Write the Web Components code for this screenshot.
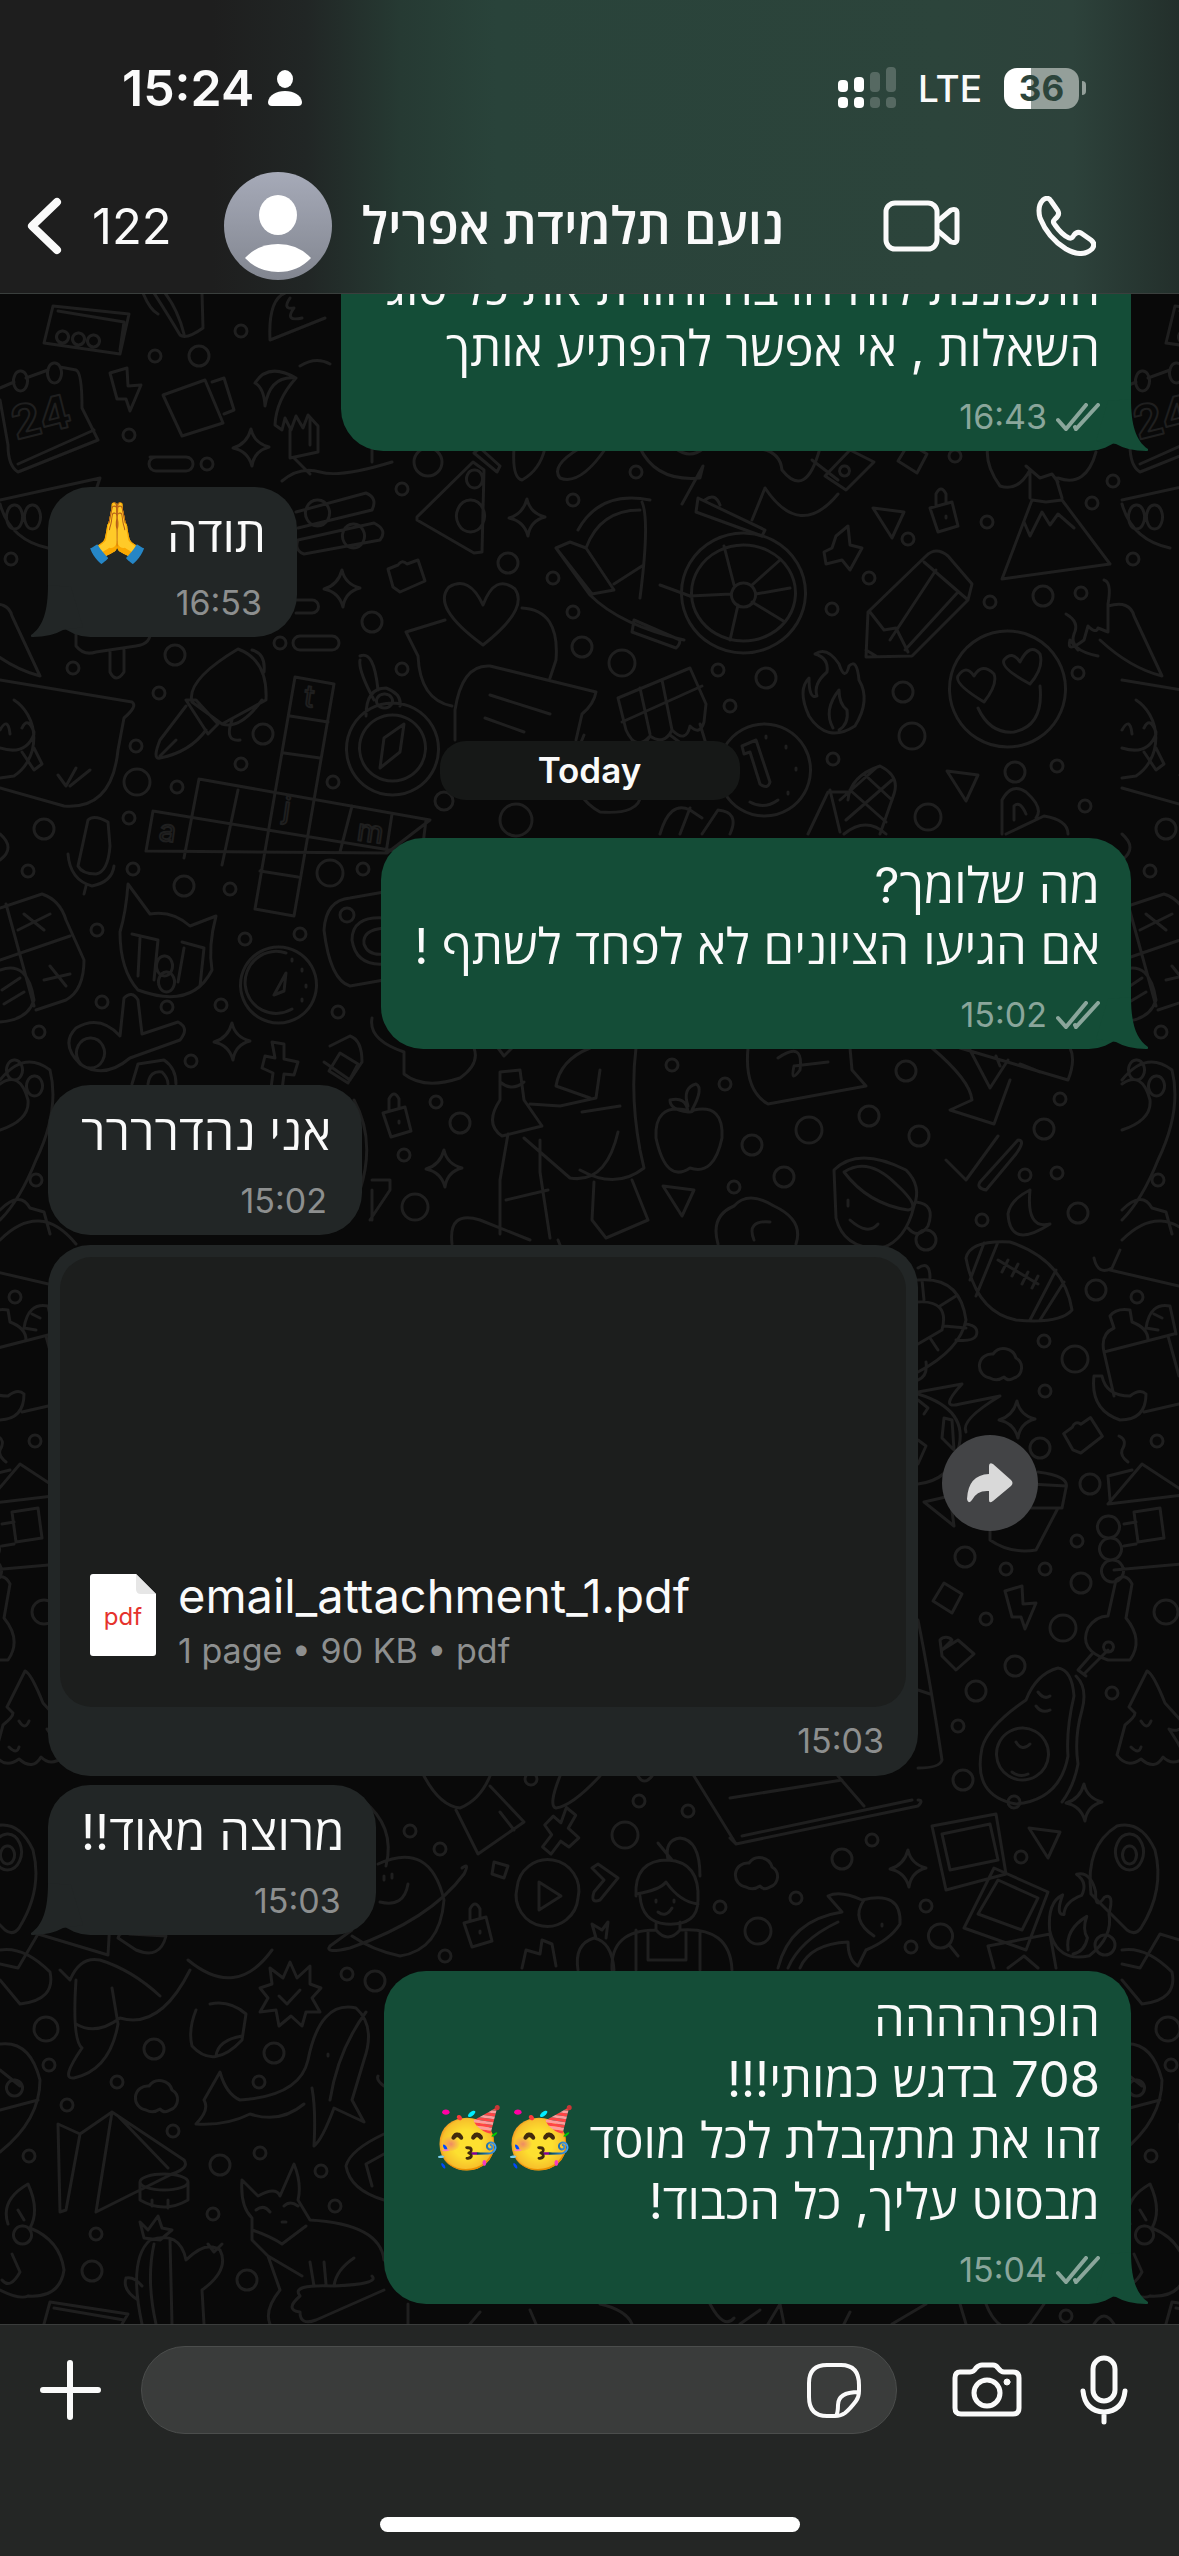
<!DOCTYPE html>
<html lang="he">
<head>
<meta charset="utf-8">
<meta name="viewport" content="width=device-width, initial-scale=1">
<title>Chat</title>
<style>
	html, body {
		margin: 0;
		height: 100%;
		background: #090909;
	}
	body {
		font-family: Inter, "Open Sans", "Noto Color Emoji", sans-serif;
		color: #fafafa;
	}
	.emoji {
		font-size: 58px;
		line-height: 50px;
	}
</style>
</head>
<body>
<chat-app>
	<chat-header slot="header" unread="122">נועם תלמידת אפריל</chat-header>

	<message-bubble direction="out" tail time="16:43">
		<div>התכוננת לזה הרבה וחזרת את כל סוגי</div>
		<div>השאלות , אי אפשר להפתיע אותך</div>
	</message-bubble>
	<message-bubble direction="in" tail time="16:53"><div>תודה <span class="emoji">🙏</span></div></message-bubble>
	<day-label>Today</day-label>
	<message-bubble direction="out" tail time="15:02">
		<div>מה שלומך?</div>
		<div>אם הגיעו הציונים לא לפחד לשתף !</div>
	</message-bubble>
	<message-bubble direction="in" time="15:02"><div>אני נהדרררר</div></message-bubble>
	<file-message name="email_attachment_1.pdf" type="pdf" time="15:03">1 page • 90 KB • pdf</file-message>
	<message-bubble direction="in" tail grouped time="15:03"><div>מרוצה מאוד!!</div></message-bubble>
	<message-bubble direction="out" tail time="15:04">
		<div>הופההההה</div>
		<div>708 בדגש כמותי!!!</div>
		<div>זהו את מתקבלת לכל מוסד <span class="emoji">🥳🥳</span></div>
		<div>מבסוט עליך, כל הכבוד!</div>
	</message-bubble>

	<message-composer slot="footer"></message-composer>
</chat-app>

<script>
const define = (name, html, setup) => {
	const template = document.createElement("template");
	template.innerHTML = html;
	customElements.define(name, class extends HTMLElement {
		constructor() {
			super();
			this._shadow = this.attachShadow({ mode: "open" });
			this._shadow.appendChild(template.content.cloneNode(true));
		}
		connectedCallback() {
			if (setup) setup(this, this._shadow);
		}
	});
};

const buttonCss = /*css*/ `
	button {
		display: flex;
		align-items: center;
		padding: 0;
		border: 0;
		background: none;
		color: inherit;
		font: inherit;
		cursor: pointer;
	}
	svg {
		display: block;
		fill: none;
		stroke: currentColor;
		stroke-linecap: round;
		stroke-linejoin: round;
	}
`;

/* ---------- wallpaper ---------- */

// x, y, radius
const rings = [
	[241,331,6],[155,356,6],[199,356,10],[129,435,6],[207,464,6],[428,462,14],[402,489,6],[573,500,6],
	[955,456,6],[636,472,6],[1113,481,6],[1092,503,6],[987,522,6],[908,539,6],[508,563,10],[553,578,6],
	[869,578,6],[11,559,6],[1043,596,10],[1081,593,6],[990,602,6],[832,609,6],[573,612,6],[372,622,10],
	[582,647,10],[622,663,13],[280,643,6],[175,655,10],[73,668,6],[402,669,6],[718,670,6],[766,678,10],
	[903,692,10],[1078,673,6],[730,706,6],[159,693,6],[912,736,13],[263,734,10],[136,746,6],[137,782,13],
	[241,764,6],[177,787,6],[333,782,6],[444,801,9],[516,820,16],[833,759,6],[1015,772,10],[1057,766,6],
	[928,817,13],[1085,806,6],[44,829,10],[129,818,6],[28,871,6],[133,869,6],[330,873,13],[363,869,6],
	[184,886,10],[230,889,6],[97,930,6],[245,939,6],[300,934,6],[347,915,7],[102,1002,6],[167,1007,6],
	[221,1005,6],[338,1012,6],[39,1032,6],[191,1061,6],[672,1065,6],[906,1071,10],[725,1084,6],[436,1102,6],
	[460,1123,10],[869,1116,10],[809,1130,13],[919,1136,10],[752,1145,10],[1044,1129,10],[1060,1099,6],
	[404,1155,6],[784,1177,10],[734,1187,6],[415,1207,13],[1025,1175,6],[1057,1173,6],[36,1180,6],
	[982,1220,6],[1078,1213,10],[926,1240,10],[1096,1290,10],[15,1297,6],[1044,1341,6],[1075,1359,13],
	[1045,1391,6],[1040,1448,10],[1090,1484,10],[1077,1541,6],[965,1557,10],[1006,1569,6],[1045,1569,6],
	[1081,1583,10],[986,1619,6],[1063,1628,13],[1015,1666,10],[976,1691,10],[958,1726,6],[1112,1693,6],
	[963,1780,10],[35,1441,6],[639,1801,6],[688,1811,6],[531,1779,6],[410,1831,6],[440,1849,6],[625,1835,13],
	[842,1859,10],[872,1840,6],[1014,1802,6],[1021,1857,6],[926,1906,6],[796,1898,6],[720,1907,6],
	[758,1931,13],[911,1947,6],[1105,1945,10],[445,1956,6],[347,1974,6],[375,1981,10],[46,2029,12],
	[154,2049,10],[274,2053,10],[49,2065,6],[117,2082,6],[259,2082,6],[67,2105,6],[173,2131,6],[260,2153,6],
	[29,2156,6],[220,2165,10],[321,2171,6],[335,2206,6],[213,2214,6],[96,2234,6],[92,2271,10],[247,2280,10],
	[1066,2316,6],[44,1612,12]
];

// small shapes drawn around 0,0
const shapes = {
	star: "M0-18Q3-4 18 0Q3 4 1 19Q-3 4-18 1Q-4-3 0-18Z",
	bolt: "M-16-17L1-22L2-4L15-5L4 21L0 9L-9 9Z",
	cloud: "M-14 14A12 12 0 0 1-11-10A13 13 0 0 1 12-6A11 11 0 0 1 10 14Q4 18 0 13Q-7 18-14 14Z",
	lock: "M-14-2L8-8L14 16L-6 22ZM-8-4V-16Q-3-26 2-16V-7M2 6V8",
	heart: "M0 30Q-52-8-34-28Q-14-40 0-10Q12-42 32-26Q46-6 0 30Z",
	puzzle: "M-18-8L-8-12Q-4-18 1-13L12-17L19 4L-6 15L-13 10Z",
	dart: "M-17-12L14-8L2 18Z",
	diamond: "M-4-15L14-4L4 15L-15 3Z",
	cross: "M-10-26L2-24L2-9L16-6L12 7L2 6L0 22L-11 20L-9 5L-20 0L-17-12L-7-10Z",
	badge: "M0-34L7-18L20-30L20-12L31-8L22 2L30 16L16 16L12 30L1 20L-11 30L-14 14L-30 16L-22 2L-30-8L-18-12L-20-28L-7-18ZM-11 0L-3 8L10-6",
	tree: "M0-42Q6-40 18-10L38 12Q30 20 22 16Q34 34 38 44Q26 54 16 44Q8 58-6 46Q-20 56-30 42L-22 12Q-12 4-12 0L-18-6ZM-6 8Q0 18 4 8M-16 34Q-8 42-6 34",
	cup: "M-44-20Q-20-44 28-20Q44-4 36 16Q28 50 4 58Q-34 60-42 28ZM-34-18Q-10-34 18-6Q44 18 30 20Q-10 14-34-18M38 12Q58 14 50 36Q40 50 30 38M-30 10V16M-28 30Q-10 46 0 34",
	rocket: "M-8-44Q16-50 30-20Q40 20 16 58Q10 66 2 60L-34 24Q-40-24-8-44ZM4-36A14 18 0 1 0 5-36M4-24A7 9 0 1 0 5-24",
	cat: "M-44-52L-22-22Q0-26 18-10L44-20Q36 10 40 34Q20 74-34 54Q-52 34-52-4Q-46-24-44-52ZM-40-2L-14 4L-18 44M-32 2L-34 40M10 6L32 12L28 50M12 12L6 46M-8 20A8 10 0 1 0-7 20M-6 36A8 10 0 1 0-5 36",
	apple: "M-4-20Q-36-26-34 8Q-24 54 0 38Q24 46 32 8Q34-26 4-20Q0-16-4-20ZM-2-18Q-4-34-20-30Q-20-20-2-18M2-20Q14-42 6-46Q-8-42-2-24",
	pear: "M22-68Q36-66 38-40Q30-6 32 20Q24 64-20 68Q-64 60-54 12Q-48-10-10-36Q0-62 22-68ZM40-60Q52-48 46-26Q38 2 42 28Q38 50 26 66M-14-8A26 26 0 1 0-13-8M-20 6Q-14 16-6 8M-24 36Q-16 42-8 38M0-30Q6-22 14-26M2-44Q8-36 14-40",
	house: "M-34 0L0-40L70 6M-34 0L50-10M-34 12A11 11 0 1 0-33 12M-32 34A11 11 0 1 0-31 34M-30 56A11 11 0 1 0-29 56M-28 66L40 60M-18 20L-6 18M-18 42L-6 40M-8 8L18 4L22 34L-4 38ZM-34-28L-10-34M-34-28L-32-4",
	flame: "M-20-36Q-8-44 4-26Q10-8 14-24Q22-32 24-10Q36 10 20 36Q-8 54-26 26Q-38 0-26-12Q-26 10-18 6Q-22-6-8-18Q-6-32-20-36ZM-2 38Q-12 20 4 0Q4 14 12 20Q14 34 4 40",
	play: "M-30-8A31 31 0 1 0 31 2A31 31 0 1 0-30-8M-8-14V14L14 0Z",
	gauge: "M0-38A38 38 0 1 0 1-38M8-32A31 31 0 1 0 14 24M8-12L-4 10L6 6ZM14-26V-24M24-16V-14M28 0V2M24 14V16",
	clock: "M0-46A46 46 0 1 0 1-46M-14 32Q0 40 14 30M-22-24L-8-30L6 12Q4 20-4 14L-14-18L-20-16ZM2-34V-32M22-24V-22M32-2V0M24 22V24"
};

// shape, x, y, rotation
const placed = [
	["star",251,447],["star",527,517],["star",342,588],["star",232,1041],["star",444,1168],["star",1017,1419],
	["star",1084,1802],["star",908,1868],["bolt",126,390],["bolt",1021,1608],["puzzle",406,577],["puzzle",1083,1437,-14],
	["cloud",1004,1364],["cloud",760,1873],["cloud",160,2096],["lock",944,510],["lock",397,1115],["lock",478,1925],
	["heart",483,615],["dart",890,520],["dart",964,783],["dart",1046,1840],["dart",680,1198],["diamond",948,1598],
	["diamond",913,458],["diamond",344,1068],["cross",282,1068],["cross",562,1835,30],["badge",290,1996],["tree",1147,1713],
	["cup",878,1190],["rocket",1125,1870],["cat",172,936],["apple",690,1130],["pear",1036,1736],
	["house",1142,1504],["flame",835,690],["play",547,1896],["gauge",278,985],["flame",1083,1915,20],["clock",764,770]
];

const big = [
	// radio and card
	"M53 306L129 314L120 354L44 343ZM62 331A6 6 0 1 0 63 331M78 333A6 6 0 1 0 79 333M93 335A6 6 0 1 0 94 335M58 311L124 322L120 350",
	"M143 293Q150 310 158 314M154 293Q170 318 180 335Q186 340 203 328L202 293M165 293Q178 310 184 334",
	"M285 293Q268 300 270 340L325 318M290 298Q282 310 294 308Q284 322 302 318",
	"M163 395L205 380L223 423L182 436ZM212 382L224 378L234 410L224 414M150 457H186A7 7 0 0 1 186 471H156A7 7 0 0 1 156 457",
	// calendar
	"M0 388L14 382M26 378L48 370M60 367L76 370Q82 372 82 408L98 440L18 472Q8 466 8 445L0 400M20 371A7 10 0 1 0 21 371M54 363A7 10 0 1 0 55 363M18 464L94 430",
	// palm island
	"M255 383Q268 362 296 378Q270 375 265 406Q264 388 255 383M296 378Q276 400 275 425L282 430L285 418L291 430L296 416L303 428L308 415L318 426V452L290 458V430M310 418V445M300 366Q316 356 330 364M282 481Q300 466 320 472T392 462M372 448V462M294 458L310 474",
	// flask, pizza slice and bracelets
	"M417 517L473 462L484 470L482 552L474 553L417 520ZM470 500A14 16 0 1 0 471 500M474 470A8 9 0 1 0 475 470M474 453L480 448L500 466L497 472Z",
	"M296 512L366 493Q378 498 372 510L298 528M317 500A12 13 0 1 0 318 500M298 540L374 523Q388 530 380 540L304 554Q294 550 298 540ZM353 524A11 12 0 1 0 354 524M296 600H312A6 6 0 0 1 312 613H296M300 636H332A7 7 0 0 1 332 650H300A7 7 0 0 1 300 636",
	"M514 448Q512 478 522 480Q540 470 545 448M580 448Q550 466 560 478Q580 486 606 448M640 448Q656 482 700 478L703 466L682 504M675 448Q690 460 704 448M750 448Q780 448 782 470Q806 500 820 448M765 488L752 520M765 488Q800 540 838 494",
	// wheelchair
	"M743 533A62 60 0 1 0 744 533M743 545A52 48 0 1 0 744 545M743 583A12 12 0 1 0 744 583M734 585L724 546M752 585L780 560M756 594L790 588M752 602L785 622M738 605L730 640M731 594L690 596",
	"M578 530Q600 490 650 500M556 548L570 542L586 548L614 590L592 594ZM642 502Q650 520 640 598M556 548L590 595Q620 625 684 640M698 498L765 530L762 536L696 512ZM705 500Q715 492 720 505M586 548Q600 510 640 510M614 584L642 566M660 585L690 596M634 620L680 640A8 10 0 0 1 676 648L632 632Z",
	"M825 476L850 450L874 462L846 490ZM844 466A5 5 0 1 0 845 466M812 460L838 480",
	// pencil
	"M926 556Q936 546 948 556L972 584L968 600L912 656L866 657L868 612ZM924 562L968 600M936 570L890 640M870 612L884 630L896 628L908 652M866 650L876 656M958 592L905 650",
	"M836 536L848 526L850 545L862 548L850 570L842 560L826 564L824 552L832 548Z",
	// mountain and cloud
	"M1002 579L1032 500L1046 502L1062 500L1110 564ZM1024 522L1030 536L1042 512L1050 525L1058 514L1074 528M1030 498V470M1062 498L1056 478M1000 486Q978 456 994 430M1026 466L1040 478L1052 474L1058 482M1000 486Q1018 492 1030 470M1058 478Q1086 488 1096 452",
	// melon
	"M0 500L100 478L96 490M0 504Q10 540 48 548M14 505A8 12 0 1 0 15 505M32 505A8 12 0 1 0 33 505",
	// love eyes smiley
	"M1007 631A58 58 0 1 0 1008 631M984 702Q954 684 958 676Q966 664 974 676Q982 662 994 674Q998 684 984 702ZM1030 684Q1000 668 1004 660Q1012 650 1020 662Q1030 642 1040 654Q1044 668 1030 684ZM978 708Q990 734 1014 732Q1044 726 1040 686",
	// pepper
	"M1066 614Q1080 622 1074 634Q1068 650 1098 656M1078 650L1070 640Q1066 654 1084 640L1088 626Q1096 634 1098 628L1108 632V604Q1112 582 1104 580M1108 606Q1130 600 1134 616L1162 676Q1130 668 1100 640",
	"M76 634V646Q84 656 96 652L136 646Q152 644 150 630M110 652V672Q116 684 124 672V650",
	// marker and pen nib
	"M192 702Q186 680 238 649Q268 660 266 700L222 724ZM186 700L196 700L218 724L208 734ZM186 706L160 740Q152 760 160 758Q190 752 206 730M160 756L176 740M252 650Q266 654 264 672M232 720Q224 742 240 740M262 700Q240 730 222 724",
	// crossword
	"M295 677L334 684L294 916L255 909ZM290 716L328 722M284 753L320 758M199 779L430 820L387 853M199 779L184 858M153 811L426 856M153 811L146 851L387 853M238 790L222 865M352 806L340 852M392 814L386 853M426 820L422 852M260 871L298 877",
	// compass
	"M392 703A46 46 0 1 0 393 703M392 715A33 33 0 1 0 393 715M380 768L384 738L404 724L400 752ZM360 656Q374 650 378 690M360 660Q358 670 374 700M384 694A8 7 0 1 0 385 694M366 716Q366 688 386 688Q402 694 400 706",
	// envelope and speech note
	"M445 620L406 632L418 656Q420 700 452 706M522 608Q560 610 556 660L550 678M455 740V710Q462 664 490 666L596 692Q594 704 582 714L576 740M490 695L550 714M485 718L524 732M584 735Q560 790 600 812Q640 815 641 794",
	// quilt
	"M618 698L690 668L706 704L704 722Q700 736 690 726Q686 744 672 730Q664 746 650 736Q636 752 626 730ZM640 688L650 734M662 680L672 730M622 722L702 686M632 740L640 752L650 736M700 724L706 744L690 750L670 735",
	// joker note
	"M0 680L132 702Q138 706 124 718L118 750Q112 810 64 806L0 788M14 700A40 44 0 0 1 14 776L0 778M22 728Q28 716 34 732M0 730Q8 716 10 734M0 748Q26 756 34 734M22 752L34 770L42 764L34 748M58 775L66 786L76 768M70 786L90 770",
	// corn and cone
	"M848 792L828 792L808 834M848 800Q850 776 880 766Q900 776 894 794L880 834M830 790L840 832M850 790L886 822M864 774L892 800M892 780L846 820M876 768L840 800M844 834Q866 816 886 834M660 834Q670 800 690 810L702 818M680 834L690 808M702 834L718 810Q740 812 730 834M1002 834V800Q1012 782 1026 792Q1044 808 1036 818M1014 820V806Q1020 800 1026 814M1006 834L1044 816Q1068 820 1068 834M0 834Q16 848 0 860",
	// mic
	"M88 820Q94 814 108 822L110 846Q108 872 96 874Q82 874 78 866ZM68 854Q70 880 92 886Q112 882 114 866M86 886L84 894",
	// candy
	"M0 908L42 894Q60 900 66 920L84 960Q84 990 66 1000L36 1010M6 904L34 1006M0 960L70 936M18 930L50 914M24 914L44 930M44 980L70 974M50 966L66 986M0 970Q28 960 34 1000Q28 1020 0 1022M2 990L20 978M4 1004L24 992",
	// camera
	"M384 892L350 898Q326 900 324 930Q330 980 350 986L384 980M384 918Q352 916 352 940Q356 966 384 964M384 928Q362 930 364 944Q368 956 384 954",
	// gym bottle and blender
	"M124 998Q132 990 138 1000L142 1034L178 1022Q190 1028 180 1040L130 1058Q104 1080 80 1064Q60 1044 76 1028Q100 1014 120 1036ZM90 1038A14 15 0 1 0 91 1038M138 1064L164 1060Q176 1068 176 1084M138 1064L132 1084M148 1084Q150 1070 162 1072Q168 1078 168 1084",
	"M330 1046L350 1036Q362 1040 362 1062L350 1080L324 1062M372 1018Q368 1040 404 1052V1074Q424 1090 460 1078Q480 1064 474 1048M498 1048L504 1056L512 1048",
	// basketball player
	"M500 1072L520 1070L524 1100L542 1126L502 1136Q484 1124 500 1100ZM500 1082Q512 1092 524 1082M590 1048Q560 1060 556 1086L590 1098M600 1070L596 1098L560 1106L530 1104M636 1048Q630 1096 640 1150L644 1168Q616 1190 580 1170M582 1112L620 1106M524 1138L570 1178Q606 1184 618 1132M508 1134L500 1180V1234M540 1140L540 1172L550 1238M506 1200L548 1190M594 1182L592 1220L606 1238L648 1220L632 1180M452 1244Q448 1210 480 1220M480 1220L530 1240M354 1100Q376 1140 360 1190M372 1180H390V1190L370 1220M372 1220V1190",
	"M570 1270L558 1240",
	// jug, paw, jet
	"M748 1048Q744 1090 768 1104L866 1086L852 1070L850 1048M778 1058Q804 1040 800 1070Q790 1084 794 1066L828 1062M932 1048Q970 1080 972 1100L950 1110L994 1124L1010 1080M960 1048L1068 1080Q1076 1060 1070 1048M970 1050L990 1088L1008 1060M996 1056L1000 1066M1020 1064L1040 1072",
	"M946 1160L966 1180L998 1136M980 1182L1018 1140Q1026 1140 1016 1154L986 1190Q976 1188 980 1182M1030 1190Q1026 1230 1050 1224Q1010 1250 1008 1214Q1010 1200 1030 1190",
	"M0 1080Q24 1050 50 1070Q60 1110 36 1160Q20 1200 0 1220M0 1130Q30 1120 28 1100Q20 1070 0 1084M14 1060A8 10 0 1 0 15 1060M34 1076A8 10 0 1 0 35 1076M0 1210Q20 1190 30 1208L44 1212L50 1234M0 1240Q40 1200 76 1244",
	"M718 1244Q710 1216 734 1206Q748 1190 774 1206Q804 1220 796 1244M754 1240Q746 1220 770 1222",
	// rugby ball
	"M966 1258Q970 1240 1010 1242Q1064 1260 1072 1310Q1060 1324 1016 1320Q976 1312 966 1258ZM998 1242L976 1296M984 1243L970 1280M1056 1270L1030 1320M1064 1282L1040 1320M998 1260L1038 1284M1008 1260L1002 1272M1018 1264L1012 1276M1028 1272L1022 1284M1038 1276L1032 1288",
	// turtle
	"M918 1280Q960 1276 966 1320Q960 1350 918 1372M918 1302Q950 1300 942 1330L918 1344M922 1280L924 1300M956 1296L940 1306M966 1328L944 1326M938 1350L930 1338M918 1268Q930 1260 930 1278M966 1324Q980 1326 976 1336Q972 1342 956 1340M926 1362Q928 1376 918 1380",
	// shopping bag and banana
	"M1104 1352L1114 1396M1104 1352L1174 1334M1104 1352Q1100 1334 1114 1328L1110 1316Q1116 1308 1130 1310L1132 1322Q1148 1328 1148 1340M1146 1328Q1150 1302 1170 1306L1176 1334M1144 1412L1179 1404M1094 1376H1102Q1106 1396 1130 1396Q1140 1388 1146 1394Q1146 1420 1120 1420Q1090 1410 1094 1376M1168 1336L1179 1376M1154 1314L1162 1318M1146 1328L1158 1330",
	"M1094 1258Q1098 1276 1112 1268L1120 1250M1110 1270L1179 1286",
	// splash ball
	"M918 1392L962 1384Q938 1410 960 1404L1000 1396Q960 1420 966 1432M918 1394Q970 1410 958 1450Q950 1480 918 1484M944 1418L952 1420L954 1450L942 1438ZM918 1400L928 1408L924 1414M918 1440L926 1446L918 1464",
	"M924 1502L950 1496L954 1526ZM990 1530V1540Q1010 1554 1036 1550L1058 1508M1038 1472Q1070 1476 1066 1488L1062 1508L1030 1508M1030 1484L1066 1486",
	"M1119 1436Q1128 1440 1122 1450Q1120 1456 1128 1462",
	// key
	"M1108 1616L1116 1580Q1126 1572 1132 1584L1126 1618Q1144 1640 1130 1660H1108Q1078 1650 1088 1628Q1096 1616 1108 1616ZM1108 1642A5 5 0 1 0 1109 1642M1108 1650L1084 1674M1092 1654L1078 1670L1086 1676",
	"M918 1620Q930 1680 942 1760Q940 1768 918 1768M918 1690L930 1694M940 1640A8 8 0 0 1 952 1640L942 1650L958 1640L974 1654L956 1670L942 1656Z",
	// laptop, tie, planet
	"M694 1776L736 1844L918 1806Q924 1800 918 1800M736 1844L730 1838M730 1798L842 1780M838 1776L864 1806M742 1836L912 1800M424 1776Q440 1806 460 1808Q480 1800 490 1776M490 1786L524 1822L478 1854L456 1810M500 1812L514 1830M560 1776Q548 1806 556 1808Q572 1806 600 1776M638 1776Q644 1786 652 1776",
	"M378 1864Q430 1840 444 1900Q440 1950 400 1956Q372 1950 352 1936M462 1868Q470 1862 464 1874Q430 1920 350 1948Q324 1954 330 1946L352 1930M384 1876V1880M392 1874V1878M408 1884Q404 1908 380 1902M362 1800Q396 1826 386 1866",
	"M494 1862L508 1866L504 1878L492 1874ZM592 1868L598 1864L618 1878L600 1900Q590 1904 594 1892L604 1880Z",
	// girl
	"M636 1896Q634 1860 668 1860Q700 1862 698 1900Q698 1926 666 1924Q642 1922 640 1896M636 1894Q660 1890 666 1882Q680 1902 698 1904M668 1860Q664 1840 680 1838Q700 1840 700 1876M658 1843L672 1860M656 1924V1930Q668 1944 680 1930V1922M612 1970Q610 1930 656 1930M680 1930Q730 1926 732 1970M636 1970V1930M648 1932V1960H686V1932M700 1970V1932M656 1900V1902M674 1900V1902M658 1912Q666 1918 672 1908",
	"M578 1970Q574 1944 594 1938Q612 1942 614 1970M596 1938L592 1924L602 1930L608 1922L606 1938M522 1968L526 1950L540 1954L542 1940L552 1944L556 1966",
	// dolphin
	"M778 1968Q790 1920 842 1912L828 1896Q840 1890 862 1900Q902 1890 900 1924Q890 1940 866 1950L858 1966Q848 1960 848 1942Q810 1944 800 1968M838 1922Q800 1940 788 1968M864 1900Q850 1920 874 1936M882 1924V1926",
	// frames
	"M932 1826L996 1814L1006 1874L946 1890ZM942 1834L990 1824L998 1860L950 1870ZM994 1868L1048 1892L1026 1950L964 1928ZM998 1880L1038 1898L1022 1930L978 1914ZM988 1946L1050 1934L1056 1968M988 1946L994 1968M940 1924A12 12 0 1 0 941 1924M950 1946L958 1956M1008 1968L1024 1956L1038 1968",
	// swimmer and seal
	"M0 1964L18 1968L38 1934L108 1955L110 1920M118 1938Q120 1930 130 1934L166 1936Q160 1960 136 1950ZM0 1950Q24 1946 50 1972Q56 2000 20 2004L0 1980M60 1970L70 1980Q80 1956 100 1960Q132 1970 160 1996M76 1980Q72 2040 82 2048Q60 2080 74 2078Q110 2070 118 2024L112 1988M76 2024Q96 2036 120 2018Q160 2030 190 1970M188 1960Q236 2000 272 1950M210 2004Q230 2000 246 2014L242 2040Q214 2070 192 2046Q188 2030 196 2010M242 2036Q218 2040 216 2056",
	// whale
	"M196 2124Q210 2110 204 2100L220 2072Q226 2094 240 2100Q300 2096 308 2060Q320 2000 356 2008Q376 2026 364 2060L352 2100L364 2122L334 2108Q322 2140 314 2146Q316 2110 312 2088M196 2124Q226 2126 250 2114Q280 2124 304 2104M366 2012Q338 2050 330 2100M328 2054V2056",
	// map and drum
	"M58 2124L80 2134L66 2210L60 2212ZM80 2134L112 2112L184 2160Q190 2168 172 2174L96 2212L112 2112M118 2116L168 2168M140 2182A24 8 0 1 0 188 2182A24 8 0 1 0 140 2182V2200Q164 2214 188 2200V2182M152 2206V2200M168 2208V2200M384 2086Q376 2080 378 2076M384 2134Q350 2150 346 2166Q350 2190 384 2200M384 2154L366 2164L372 2186",
	"M0 2044Q30 2040 40 2080Q40 2120 0 2152M0 2070L20 2086M0 2110L38 2100M14 2080A8 8 0 1 0 15 2080",
	// fox
	"M242 2180L258 2196Q276 2186 280 2196L294 2164Q302 2184 298 2200L310 2220Q380 2224 384 2260M242 2180Q240 2206 252 2218V2240L268 2256L280 2290Q264 2310 270 2324M252 2230Q270 2236 282 2244L306 2226M282 2222H286M256 2210Q264 2204 270 2212M284 2206Q290 2200 298 2206M268 2256L302 2276M310 2262L314 2286M324 2262L326 2284M354 2258Q336 2270 334 2286Q380 2284 372 2276M334 2286Q290 2284 300 2296Q284 2310 300 2312Q300 2326 316 2320L384 2290",
	// cactus
	"M142 2324Q128 2260 150 2240Q180 2230 186 2260Q206 2240 220 2250Q230 2270 202 2290L204 2324M154 2244Q146 2280 156 2324M170 2240L172 2324M138 2300Q122 2290 126 2278Q134 2276 142 2286M140 2222L148 2230L158 2216L162 2228L172 2230L160 2240L144 2238ZM208 2244L214 2252L222 2244",
	// lamp
	"M8 2224Q0 2200 28 2184Q40 2210 30 2228Q60 2240 64 2270Q60 2298 28 2296M22 2226A9 9 0 1 0 23 2226M18 2210L24 2220M0 2290Q20 2300 28 2296M12 2254L20 2272Q10 2290 2 2280",
	"M44 2324L50 2302L128 2314L122 2324M54 2308L124 2320M408 2324V2304M470 2324L480 2312M530 2310L536 2324M600 2304Q626 2310 632 2324M710 2304Q724 2330 734 2318M740 2324L760 2310M768 2324L780 2304L784 2324M844 2324L850 2312M892 2324L926 2304M960 2304L966 2324M986 2304Q1000 2340 1030 2324L1044 2304M1094 2324Q1104 2308 1114 2324"
];

define("chat-wallpaper", /*html*/ `
<style>
	:host {
		display: block;
		overflow: hidden;
		pointer-events: none;
	}
	svg {
		display: block;
		width: 100%;
		height: 100%;
		fill: none;
		stroke: #1f1f1f;
		stroke-width: 3;
		stroke-linecap: round;
		stroke-linejoin: round;
	}
	text {
		stroke-width: 2;
	}
	.date {
		font-size: 46px;
		font-weight: 700;
	}
	.letter {
		font-size: 30px;
	}
</style>
<svg viewBox="0 294 1179 2030" preserveAspectRatio="xMinYMin slice" aria-hidden="true">
	<g id="tile"></g>
	<use href="#tile" x="1122"></use>
	<use href="#tile" x="-1122"></use>
</svg>`, (el, root) => {
	root.getElementById("tile").innerHTML =
		rings.map(([x, y, r]) => `<circle cx="${x}" cy="${y}" r="${r}"/>`).join("") +
		placed.map(([name, x, y, turn]) =>
			`<path d="${shapes[name]}" transform="translate(${x} ${y}) rotate(${turn || 0})"/>`).join("") +
		big.map(d => `<path d="${d}"/>`).join("") +
		`<text class="date" transform="translate(16 440) rotate(-14)">24</text>` +
		[["t", 303, 706], ["a", 158, 840], ["j", 282, 818], ["m", 356, 840]].map(([letter, x, y]) =>
			`<text class="letter" transform="translate(${x} ${y}) rotate(8)">${letter}</text>`).join("");
});

/* ---------- page ---------- */

define("chat-app", /*html*/ `
<style>
	:host {
		display: flex;
		flex-direction: column;
		height: 100vh;
	}
	main {
		position: relative;
		flex: 1;
		min-height: 0;
		display: flex;
		flex-direction: column;
		justify-content: flex-end;
		box-sizing: border-box;
		padding: 0 48px 20px;
		overflow: hidden;
	}
	chat-wallpaper {
		position: absolute;
		inset: 0;
	}
</style>
<slot name="header"></slot>
<main>
	<chat-wallpaper></chat-wallpaper>
	<slot></slot>
</main>
<slot name="footer"></slot>`);

define("status-bar", /*html*/ `
<style>
	:host {
		display: flex;
		align-items: center;
		justify-content: space-between;
		height: 60px;
		padding: 58px 93px 0 122px;
	}
	div {
		display: flex;
		align-items: center;
	}
	.clock {
		gap: 14px;
		font-size: 50px;
		font-weight: 600;
	}
	.radio {
		gap: 22px;
		font-size: 37px;
		font-weight: 500;
	}
	.battery {
		gap: 3px;
	}
	.level {
		justify-content: center;
		width: 75px;
		height: 41px;
		border-radius: 13px;
		background: linear-gradient(90deg, #fff 36%, #949f9a 36%);
		color: #2c443b;
		font-size: 35px;
		font-weight: 700;
	}
	.nub {
		width: 4px;
		height: 14px;
		border-radius: 0 4px 4px 0;
		background: #949f9a;
	}
	svg {
		display: block;
		fill: #fff;
	}
</style>
<div class="clock">
	<span>15:24</span>
	<svg width="34" height="36" viewBox="0 0 34 36"><ellipse cx="17" cy="9" rx="8" ry="9"/><path d="M0 32C1 25 8 21 17 21S33 25 34 32Q34 36 30 36H4Q0 36 0 32Z"/></svg>
</div>
<div class="radio">
	<svg width="58" height="42" viewBox="0 0 58 42">
		<rect y="13" width="10" height="12" rx="4"/><rect x="16" y="10" width="10" height="15" rx="4"/>
		<rect y="30" width="10" height="11" rx="4"/><rect x="16" y="30" width="10" height="11" rx="4"/>
		<g opacity=".2"><rect x="32" y="5" width="10" height="20" rx="4"/><rect x="48" width="10" height="25" rx="4"/>
		<rect x="32" y="30" width="10" height="11" rx="4"/><rect x="48" y="30" width="10" height="11" rx="4"/></g>
	</svg>
	<span>LTE</span>
	<div class="battery"><div class="level">36</div><div class="nub"></div></div>
</div>`);

define("chat-header", /*html*/ `
<style>
	${buttonCss}
	:host {
		display: block;
		border-bottom: 1px solid #3a3f3d;
		background: linear-gradient(90deg, #1e1e1e 18%, #212625 26%, #263a33 34%, #29433a 42%, #2c443b 80%, #2d423b 91%, #232f2b 100%);
	}
	header {
		display: flex;
		align-items: center;
		height: 108px;
		padding: 54px 83px 13px 27px;
	}
	.back {
		gap: 30px;
		font-size: 49px;
	}
	.avatar {
		margin-left: 52px;
	}
	h1 {
		flex: 1;
		margin: 0 0 0 30px;
		font-size: 51px;
		font-weight: 600;
		line-height: 62px;
		text-align: left;
		white-space: nowrap;
	}
	.call {
		margin-left: 76px;
	}
</style>
<status-bar></status-bar>
<header>
	<button class="back" aria-label="Back">
		<svg width="35" height="58" viewBox="0 0 35 58" stroke-width="8"><path d="M30 5L5 29L30 53"/></svg>
		<span id="unread"></span>
	</button>
	<svg class="avatar" width="108" height="108" viewBox="0 0 108 108">
		<defs><linearGradient id="g" x1="0" y1="0" x2="0" y2="1"><stop stop-color="#a6aab8"/><stop offset="1" stop-color="#828690"/></linearGradient></defs>
		<g stroke="none"><circle cx="54" cy="54" r="54" fill="url(#g)"/>
		<ellipse cx="54" cy="43" rx="19" ry="20" fill="#fff"/>
		<path fill="#fff" d="M21 86Q34 72 54 72T87 86Q74 100 54 100T21 86Z"/></g>
	</svg>
	<h1 dir="rtl"><slot></slot></h1>
	<button aria-label="Video call">
		<svg width="78" height="54" viewBox="0 0 78 54" stroke-width="5"><rect x="4" y="4" width="51" height="46" rx="9"/><path d="M56 22L69 11Q75 9 75 14V40Q75 45 69 43L56 32"/></svg>
	</button>
	<button class="call" aria-label="Voice call">
		<svg width="60" height="60" viewBox="0 0 60 60" stroke-width="5"><path d="M7 4Q12 0 15 5L22 15Q24 19 19 23Q16 26 19 29Q26 39 33 42Q36 43 38 39Q41 35 45 37L55 44Q60 48 56 53Q46 62 30 53Q12 42 4 22Q1 10 7 4Z"/></svg>
	</button>
</header>`, (el, root) => {
	root.getElementById("unread").textContent = el.getAttribute("unread");
});

define("day-label", /*html*/ `
<style>
	:host {
		position: relative;
		align-self: center;
		box-sizing: border-box;
		width: 300px;
		margin: 104px 0 2px;
		border-radius: 26px;
		background: #161817;
		font-size: 35px;
		font-weight: 600;
		line-height: 59px;
		text-align: center;
	}
</style>
<slot></slot>`);

define("message-bubble", /*html*/ `
<style>
	:host {
		position: relative;
		align-self: flex-start;
		flex-shrink: 0;
		box-sizing: border-box;
		margin-top: 36px;
		padding: 17px 31px 14px 33px;
		border-radius: 42px;
		background: #222626;
		font-size: 49px;
		line-height: 61px;
		--meta: #8d8f8f;
	}
	:host([grouped]) {
		margin-top: 9px;
	}
	:host([direction=out]) {
		align-self: flex-end;
		min-width: 69%;
		background: #144d37;
		--meta: #8aa69b;
	}
	.text {
		direction: rtl;
		white-space: nowrap;
	}
	.meta {
		display: flex;
		align-items: center;
		justify-content: flex-end;
		gap: 9px;
		margin: 18px 4px 0 0;
		color: var(--meta);
		font-size: 34px;
		line-height: 40px;
	}
	:host([direction=out]) .meta {
		margin-right: 0;
	}
	svg {
		display: none;
	}
	.ticks {
		fill: none;
		stroke: var(--meta);
		stroke-width: 4;
		stroke-linecap: round;
	}
	:host([direction=out]) .ticks {
		display: block;
	}
	.tail {
		position: absolute;
		left: -17px;
		bottom: 0;
		fill: #222626;
	}
	:host([tail]) .tail {
		display: block;
	}
	:host([direction=out]) .tail {
		left: auto;
		right: -17px;
		fill: #144d37;
		transform: scaleX(-1);
	}
</style>
<svg class="tail" width="60" height="60" viewBox="0 0 60 60"><path d="M17 8C17 34 12 50 0 58Q-1 60 2 60Q20 60 32 53L52 50L40 10Z"/></svg>
<div class="text"><slot></slot></div>
<div class="meta">
	<time></time>
	<svg class="ticks" width="44" height="28" viewBox="0 0 44 28"><path d="M2 17L10 26L30 2M19 24L20 26L42 2"/></svg>
</div>`, (el, root) => {
	root.querySelector("time").textContent = el.getAttribute("time");
});

define("file-message", /*html*/ `
<style>
	${buttonCss}
	:host {
		position: relative;
		display: flex;
		flex-shrink: 0;
		align-items: center;
		gap: 24px;
		margin-top: 10px;
	}
	article {
		box-sizing: border-box;
		width: 870px;
		padding: 12px 12px 10px;
		border-radius: 42px;
		background: #222626;
	}
	a {
		display: flex;
		align-items: flex-end;
		gap: 22px;
		box-sizing: border-box;
		height: 450px;
		padding: 0 30px 31px;
		border-radius: 32px;
		background: #1c1e1d;
		color: inherit;
		text-decoration: none;
	}
	.icon {
		flex-shrink: 0;
		margin-bottom: 20px;
	}
	.icon text {
		fill: #e5322d;
		stroke: none;
		font-size: 24px;
	}
	.name {
		font-size: 47px;
		line-height: 60px;
	}
	.info, time {
		color: #8d8f8f;
		font-size: 34px;
		line-height: 50px;
	}
	time {
		display: block;
		margin: 9px 22px 0 0;
		text-align: right;
	}
	.forward {
		justify-content: center;
		width: 96px;
		height: 96px;
		border-radius: 50%;
		background: #434446;
		margin-bottom: 56px;
	}
</style>
<article>
	<a href="#file">
		<svg class="icon" width="66" height="82" viewBox="0 0 66 82">
			<path fill="#fff" stroke="none" d="M3 0H46L66 20V79Q66 82 63 82H3Q0 82 0 79V3Q0 0 3 0Z"/>
			<path fill="#e6e6e6" stroke="none" d="M46 0L66 20H51Q46 20 46 15Z"/>
			<text x="33" y="51" text-anchor="middle"></text>
		</svg>
		<div><div class="name"></div><div class="info"><slot></slot></div></div>
	</a>
	<time></time>
</article>
<button class="forward" aria-label="Forward">
	<svg width="46" height="40" viewBox="0 0 46 40"><path fill="#d9d9d9" stroke="none" d="M22 3Q22-1 26 1L44 17Q47 20 44 23L26 38Q22 41 22 37V28Q10 27 5 37Q1 42 0 36Q1 12 22 11Z"/></svg>
</button>`, (el, root) => {
	root.querySelector(".name").textContent = el.getAttribute("name");
	root.querySelector("text").textContent = el.getAttribute("type");
	root.querySelector("time").textContent = el.getAttribute("time");
});

define("message-composer", /*html*/ `
<style>
	${buttonCss}
	:host {
		display: block;
		border-top: 1px solid #3a3c3b;
		background: #242625;
	}
	form {
		display: flex;
		align-items: center;
		padding: 21px 51px 0 40px;
	}
	.field {
		flex: 1;
		min-width: 0;
		display: flex;
		align-items: center;
		box-sizing: border-box;
		height: 88px;
		margin: 0 55px 0 40px;
		padding: 0 34px;
		border: 1px solid #4b4d4c;
		border-radius: 44px;
		background: #3a3c3b;
	}
	input {
		flex: 1;
		min-width: 0;
		padding: 0;
		border: 0;
		outline: 0;
		background: none;
		color: inherit;
		font: inherit;
		font-size: 48px;
	}
	.mic {
		margin-left: 58px;
	}
	.home {
		width: 420px;
		height: 15px;
		margin: 83px auto 24px;
		border-radius: 8px;
		background: #fff;
	}
</style>
<form>
	<button type="button" aria-label="Attach"><svg width="61" height="60" viewBox="0 0 61 60" stroke-width="6"><path d="M30 3V57M3 30H58"/></svg></button>
	<div class="field">
		<input type="text" aria-label="Message">
		<button type="button" aria-label="Stickers"><svg width="55" height="55" viewBox="0 0 55 55" stroke-width="4"><path d="M20 2H34Q52 2 52 22V28Q52 34 49 38Q43 46 38 50Q34 53 28 53H20Q2 53 2 34V20Q2 2 20 2ZM52 29Q31 29 31 42Q31 50 29 53"/></svg></button>
	</div>
	<button type="button" aria-label="Camera"><svg width="70" height="56" viewBox="0 0 70 56" stroke-width="5"><path d="M8 10H18Q22 10 24 6Q27 3 30 3H41Q44 3 46 6Q49 10 52 10H61Q67 10 67 16V46Q67 52 61 52H9Q3 52 3 46V16Q3 10 8 10Z"/><circle cx="35" cy="31" r="13"/><circle cx="55" cy="20" r="3" fill="currentColor" stroke-width="1"/></svg></button>
	<button class="mic" type="button" aria-label="Record"><svg width="48" height="70" viewBox="0 0 48 70" stroke-width="5"><rect x="13" y="3" width="22" height="43" rx="11"/><path d="M3 36Q5 56 24 57Q43 56 45 36M24 57V67"/></svg></button>
</form>
<div class="home"></div>`);
</script>
</body>
</html>
